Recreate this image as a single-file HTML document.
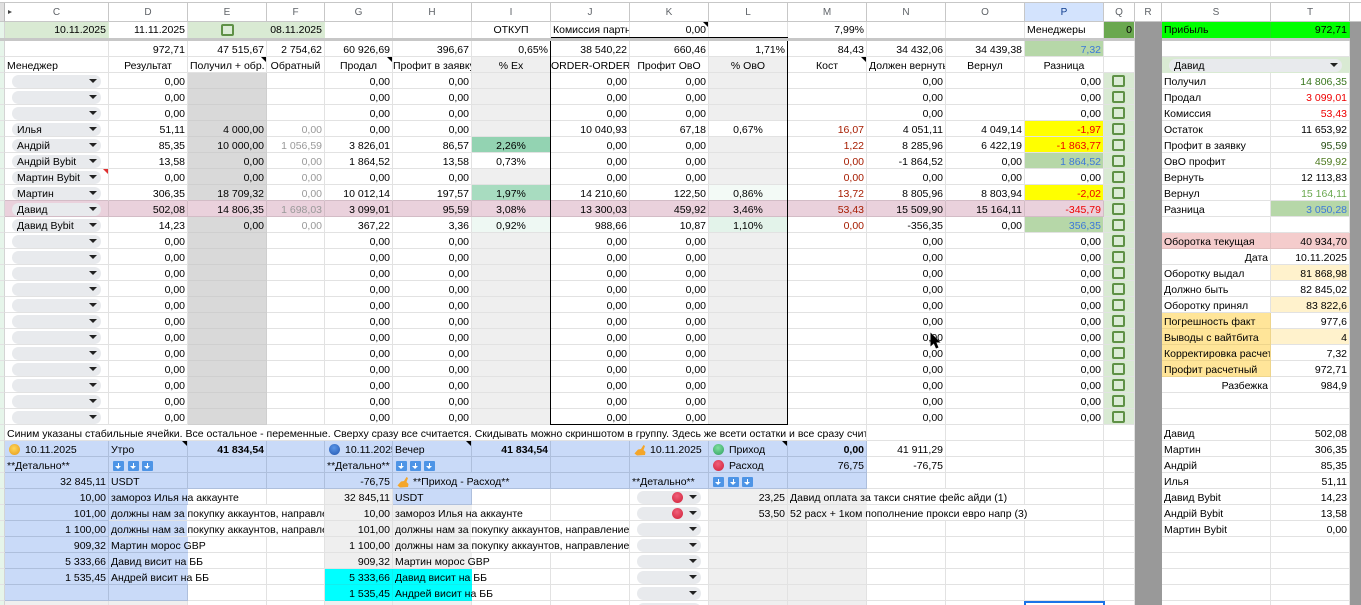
<!DOCTYPE html>
<html><head><meta charset="utf-8"><style>
html,body{margin:0;padding:0;width:1361px;height:605px;overflow:hidden;background:#fff}
#wrap{position:relative;width:1361px;height:605px;overflow:hidden}
table{position:absolute;left:0;top:3px;border-collapse:separate;border-spacing:0;table-layout:fixed;width:1361px}
td{height:16px;box-sizing:border-box;padding:3px 2px 0;border-right:1px solid #e2e2e2;border-bottom:1px solid #e2e2e2;text-align:right;white-space:nowrap;font:10.5px/12px "Liberation Sans","Noto Sans CJK SC",sans-serif;color:#000;vertical-align:top}
.u{background:#e6f5ea;border-right:1px solid #d4d4d4;padding:0}
.w td{height:19px;border-color:#c7c7c7;text-align:center;color:#5f6368;font-size:10px;line-height:15px;padding:2px 0 0}
.w td.u{background:#e0e0e0;border-right:1px solid #bbb}
.w td.sel{background:#d3e3fd;color:#0b3a8c}
.f td{border-bottom:0;padding-top:2px}
.f td.u{border-bottom:0}
.bar td{height:3px;padding:0;border:0;font-size:0;line-height:0;background:#c7c7c7}
.bar td.r{background:#999}
.l{text-align:left}
.c{text-align:center}
.h{overflow:hidden}
.nb{border-right:0}
.g{background:#efefef}
.e{background:#d9d9d9;border-color:#cfcfcf}
.q{background:#d9ead3;position:relative}
.r{background:#999;border-right:0;border-bottom:0;padding:0}
.y{background:#ff0;color:#e00}
.gb{background:#b6d7a8;color:#3c78d8}
.fg{color:#999}
.mr{color:#a61c00}
.b{background:#c9daf8;border-color:#aebfdc}
.cy{background:#0ff;border-color:#1ee}
.rel{position:relative}
.dg{background:#6aa84f}
.lime{background:#0f0;border-color:#1ee01e}
.pk{background:#f4cccc;border-color:#e3c0c0}
.cr{background:#fff2cc}
.am{background:#ffe599;border-color:#eed58c}
.bd{font-weight:bold}
.p{position:absolute;left:7px;top:2px;height:13px;width:89px;background:#e8eaed;border-radius:7px;padding-left:5px;box-sizing:border-box;line-height:14px;text-align:left}
.p:after{content:"";position:absolute;right:4px;top:4px;border-left:4px solid transparent;border-right:4px solid transparent;border-top:4px solid #222}
.p2{width:64px}
.p3{width:173px}
.k{position:absolute;left:8px;top:2px;width:13px;height:12px;box-sizing:border-box;border:2px solid #5f9146;border-radius:2px;background:#dcecd6}
.n:after,.nr:after{content:"";position:absolute;right:0;top:0;border-left:5px solid transparent;border-top:5px solid #000}
.nr:after{border-top-color:#e03030}
.o{position:absolute;left:4px;top:3px;width:11px;height:11px;border-radius:50%}
.oy{background:radial-gradient(circle at 45% 40%,#ffd75a,#e8a020 85%)}
.ob{background:radial-gradient(circle at 45% 35%,#5b96e8,#2a5fb8 85%)}
.og{background:radial-gradient(circle at 45% 35%,#7fe0a0,#3aa868 85%)}
.ore{background:radial-gradient(circle at 45% 35%,#f0607a,#d42840 85%)}
.pl{padding-left:20px}
.a{position:absolute;top:4px;width:10.5px;height:10px;background:#4d94e6;border-radius:1px}
.a:before{content:"";position:absolute;left:4.5px;top:1.5px;width:1.5px;height:4px;background:#fff}
.a:after{content:"";position:absolute;left:2.2px;top:5px;border-left:3px solid transparent;border-right:3px solid transparent;border-top:3.5px solid #fff}
.a1{left:4px}.a2{left:19px}.a3{left:33px}
svg.w1{position:absolute;left:4px;top:3px}
tr.d td:nth-child(n+2):nth-child(-n+15){background:#ead1dc;border-color:#d3bcc6}
tr.t td:nth-child(n+2):nth-child(-n+15){border-bottom-color:#d3bcc6}
.abs{position:absolute}
</style></head><body><div id="wrap">
<div class="abs" style="left:0;top:2px;width:1361px;height:1px;background:#c7c7c7"></div>
<table>
<colgroup><col style="width:5px"><col style="width:104px"><col style="width:79px"><col style="width:79px"><col style="width:58px"><col style="width:68px"><col style="width:79px"><col style="width:79px"><col style="width:79px"><col style="width:79px"><col style="width:79px"><col style="width:79px"><col style="width:79px"><col style="width:79px"><col style="width:79px"><col style="width:31px"><col style="width:27px"><col style="width:109px"><col style="width:79px"><col style="width:11px"></colgroup>
<tr class="w"><td class="u"><td>C<td>D<td>E<td>F<td>G<td>H<td>I<td>J<td>K<td>L<td>M<td>N<td>O<td class="sel">P<td>Q<td>R<td>S<td>T<td style="border-right:0">
<tr class="f"><td class="u"><td class="q" style="border-color:#d9ead3">10.11.2025<td>11.11.2025<td class="q" style="border-color:#d9ead3"><i class="k" style="left:33px"></i><td class="q" style="border-color:#d9ead3">08.11.2025<td><td><td class="c">ОТКУП<td class="l h">Комиссия партн<td class="n rel">0,00<td><td>7,99%<td><td><td class="l">Менеджеры<td class="dg">0<td class="r"><td class="l lime">Прибыль<td class="lime">972,71<td class="r">
<tr class="bar"><td class="u" colspan="16"><td class="r"><td colspan="2"><td class="r">
<tr><td class="u"><td><td>972,71<td>47 515,67<td>2 754,62<td>60 926,69<td>396,67<td>0,65%<td>38 540,22<td>660,46<td>1,71%<td>84,43<td>34 432,06<td>34 439,38<td class="gb">7,32<td><td class="r"><td><td><td class="r">
<tr><td class="u"><td class="l">Менеджер<td class="c">Результат<td class="c n rel">Получил + обр.<td class="c">Обратный<td class="c n rel">Продал<td class="c h" style="padding-left:0;padding-right:0">Профит в заявку<td class="c g">% Ex<td class="c h" style="padding-left:0;padding-right:0">ORDER-ORDER<td class="c">Профит ОвО<td class="c g">% ОвО<td class="c n rel">Кост<td class="c h" style="text-align:left">Должен вернуть<td class="c">Вернул<td class="c">Разница<td><td class="r"><td class="q" colspan="2" style="border-color:#d9ead3"><div class="p p3">Давид</div><td class="r">
<tr><td class="u"><td class="rel"><div class="p"></div><td>0,00<td class="e"><td><td>0,00<td>0,00<td class="g"><td>0,00<td>0,00<td class="g"><td><td>0,00<td><td>0,00<td class="q"><i class="k"></i><td class="r"><td class="l">Получил<td style="color:#38761d">14 806,35<td class="r">
<tr><td class="u"><td class="rel"><div class="p"></div><td>0,00<td class="e"><td><td>0,00<td>0,00<td class="g"><td>0,00<td>0,00<td class="g"><td><td>0,00<td><td>0,00<td class="q"><i class="k"></i><td class="r"><td class="l">Продал<td style="color:#e00">3 099,01<td class="r">
<tr><td class="u"><td class="rel"><div class="p"></div><td>0,00<td class="e"><td><td>0,00<td>0,00<td class="g"><td>0,00<td>0,00<td class="g"><td><td>0,00<td><td>0,00<td class="q"><i class="k"></i><td class="r"><td class="l">Комиссия<td style="color:#e00">53,43<td class="r">
<tr><td class="u"><td class="rel"><div class="p">Илья</div><td>51,11<td class="e">4 000,00<td class="fg">0,00<td>0,00<td>0,00<td class="g"><td>10 040,93<td>67,18<td class="c">0,67%<td class="mr">16,07<td>4 051,11<td>4 049,14<td class="y">-1,97<td class="q"><i class="k"></i><td class="r"><td class="l">Остаток<td>11 653,92<td class="r">
<tr><td class="u"><td class="rel"><div class="p">Андрій</div><td>85,35<td class="e">10 000,00<td class="fg">1 056,59<td>3 826,01<td>86,57<td class="c" style="background:#93d3b2">2,26%<td>0,00<td>0,00<td class="g"><td class="mr">1,22<td>8 285,96<td>6 422,19<td class="y">-1 863,77<td class="q"><i class="k"></i><td class="r"><td class="l">Профит в заявку<td style="color:#274e13">95,59<td class="r">
<tr><td class="u"><td class="rel"><div class="p">Андрій Bybit</div><td>13,58<td class="e">0,00<td class="fg">0,00<td>1 864,52<td>13,58<td class="c">0,73%<td>0,00<td>0,00<td class="g"><td class="mr">0,00<td>-1 864,52<td>0,00<td class="gb">1 864,52<td class="q"><i class="k"></i><td class="r"><td class="l">ОвО профит<td style="color:#4d7a1f">459,92<td class="r">
<tr><td class="u"><td class="rel nr"><div class="p">Мартин Bybit</div><td>0,00<td class="e">0,00<td class="fg">0,00<td>0,00<td>0,00<td class="g"><td>0,00<td>0,00<td class="g"><td class="mr">0,00<td>0,00<td>0,00<td>0,00<td class="q"><i class="k"></i><td class="r"><td class="l">Вернуть<td>12 113,83<td class="r">
<tr class="t"><td class="u"><td class="rel"><div class="p">Мартин</div><td>306,35<td class="e">18 709,32<td class="fg">0,00<td>10 012,14<td>197,57<td class="c" style="background:#a8dcc0">1,97%<td>14 210,60<td>122,50<td class="c" style="background:#f3faf6">0,86%<td class="mr">13,72<td>8 805,96<td>8 803,94<td class="y">-2,02<td class="q"><i class="k"></i><td class="r"><td class="l">Вернул<td style="color:#6aa84f">15 164,11<td class="r">
<tr class="d"><td class="u"><td class="rel"><div class="p">Давид</div><td>502,08<td>14 806,35<td class="fg">1 698,03<td>3 099,01<td>95,59<td class="c">3,08%<td>13 300,03<td>459,92<td class="c">3,46%<td class="mr">53,43<td>15 509,90<td>15 164,11<td class="y">-345,79<td class="q"><i class="k"></i><td class="r"><td class="l">Разница<td class="gb">3 050,28<td class="r">
<tr><td class="u"><td class="rel"><div class="p">Давид Bybit</div><td>14,23<td class="e">0,00<td class="fg">0,00<td>367,22<td>3,36<td class="c" style="background:#eef8f3">0,92%<td>988,66<td>10,87<td class="c" style="background:#e3f3ea">1,10%<td class="mr">0,00<td>-356,35<td>0,00<td class="gb">356,35<td class="q"><i class="k"></i><td class="r"><td><td><td class="r">
<tr><td class="u"><td class="rel"><div class="p"></div><td>0,00<td class="e"><td><td>0,00<td>0,00<td class="g"><td>0,00<td>0,00<td class="g"><td><td>0,00<td><td>0,00<td class="q"><i class="k"></i><td class="r"><td class="l pk">Оборотка текущая<td class="pk">40 934,70<td class="r">
<tr><td class="u"><td class="rel"><div class="p"></div><td>0,00<td class="e"><td><td>0,00<td>0,00<td class="g"><td>0,00<td>0,00<td class="g"><td><td>0,00<td><td>0,00<td class="q"><i class="k"></i><td class="r"><td>Дата<td>10.11.2025<td class="r">
<tr><td class="u"><td class="rel"><div class="p"></div><td>0,00<td class="e"><td><td>0,00<td>0,00<td class="g"><td>0,00<td>0,00<td class="g"><td><td>0,00<td><td>0,00<td class="q"><i class="k"></i><td class="r"><td class="l">Оборотку выдал<td class="cr">81 868,98<td class="r">
<tr><td class="u"><td class="rel"><div class="p"></div><td>0,00<td class="e"><td><td>0,00<td>0,00<td class="g"><td>0,00<td>0,00<td class="g"><td><td>0,00<td><td>0,00<td class="q"><i class="k"></i><td class="r"><td class="l">Должно быть<td>82 845,02<td class="r">
<tr><td class="u"><td class="rel"><div class="p"></div><td>0,00<td class="e"><td><td>0,00<td>0,00<td class="g"><td>0,00<td>0,00<td class="g"><td><td>0,00<td><td>0,00<td class="q"><i class="k"></i><td class="r"><td class="l">Оборотку принял<td class="cr">83 822,6<td class="r">
<tr><td class="u"><td class="rel"><div class="p"></div><td>0,00<td class="e"><td><td>0,00<td>0,00<td class="g"><td>0,00<td>0,00<td class="g"><td><td>0,00<td><td>0,00<td class="q"><i class="k"></i><td class="r"><td class="l am">Погрешность факт<td>977,6<td class="r">
<tr><td class="u"><td class="rel"><div class="p"></div><td>0,00<td class="e"><td><td>0,00<td>0,00<td class="g"><td>0,00<td>0,00<td class="g"><td><td>0,00<td><td>0,00<td class="q"><i class="k"></i><td class="r"><td class="l am">Выводы с вайтбита<td class="cr">4<td class="r">
<tr><td class="u"><td class="rel"><div class="p"></div><td>0,00<td class="e"><td><td>0,00<td>0,00<td class="g"><td>0,00<td>0,00<td class="g"><td><td>0,00<td><td>0,00<td class="q"><i class="k"></i><td class="r"><td class="l am h">Корректировка расчет<td>7,32<td class="r">
<tr><td class="u"><td class="rel"><div class="p"></div><td>0,00<td class="e"><td><td>0,00<td>0,00<td class="g"><td>0,00<td>0,00<td class="g"><td><td>0,00<td><td>0,00<td class="q"><i class="k"></i><td class="r"><td class="l am">Профит расчетный<td>972,71<td class="r">
<tr><td class="u"><td class="rel"><div class="p"></div><td>0,00<td class="e"><td><td>0,00<td>0,00<td class="g"><td>0,00<td>0,00<td class="g"><td><td>0,00<td><td>0,00<td class="q"><i class="k"></i><td class="r"><td>Разбежка<td>984,9<td class="r">
<tr><td class="u"><td class="rel"><div class="p"></div><td>0,00<td class="e"><td><td>0,00<td>0,00<td class="g"><td>0,00<td>0,00<td class="g"><td><td>0,00<td><td>0,00<td class="q"><i class="k"></i><td class="r"><td><td><td class="r">
<tr><td class="u"><td class="rel"><div class="p"></div><td>0,00<td class="e"><td><td>0,00<td>0,00<td class="g"><td>0,00<td>0,00<td class="g"><td><td>0,00<td><td>0,00<td class="q"><i class="k"></i><td class="r"><td><td><td class="r">
<tr><td class="u"><td class="l h" colspan="11">Синим указаны стабильные ячейки. Все остальное - переменные. Сверху сразу все считается. Скидывать можно скриншотом в группу. Здесь же всети остатки и все сразу счит<td><td><td><td><td class="r"><td class="l">Давид<td>502,08<td class="r">
<tr><td class="u"><td class="b l rel pl"><i class="o oy"></i>10.11.2025<td class="b l n rel">Утро<td class="b bd">41 834,54<td class="b"><td class="b l rel h pl"><i class="o ob"></i>10.11.2025<td class="b l n rel">Вечер<td class="b bd">41 834,54<td class="b"><td class="b l rel pl"><svg class="w1" width="12" height="12" viewBox="0 0 12 12"><path d="M0.5 9.5 L4 5.5 L7 5 L9.5 1 L11 2 L9.5 6 L11.5 8 L11 11 L3 11.5 Z" fill="#f4a62a"/></svg>10.11.2025<td class="b l n rel pl"><i class="o og"></i>Приход<td class="b bd">0,00<td>41 911,29<td><td><td><td class="r"><td class="l">Мартин<td>306,35<td class="r">
<tr><td class="u"><td class="b l">**Детально**<td class="b rel"><i class="a a1"></i><i class="a a2"></i><i class="a a3"></i><td class="b"><td class="b"><td class="b l">**Детально**<td class="b rel"><i class="a a1" style="left:3px"></i><i class="a a2" style="left:17px"></i><i class="a a3" style="left:31px"></i><td class="b"><td class="b"><td class="b"><td class="b l rel pl"><i class="o ore"></i>Расход<td class="b">76,75<td>-76,75<td><td><td><td class="r"><td class="l">Андрій<td>85,35<td class="r">
<tr><td class="u"><td class="b">32 845,11<td class="b l">USDT<td class="b"><td class="b"><td class="b">-76,75<td class="b l rel nb pl"><svg class="w1" width="12" height="12" viewBox="0 0 12 12"><path d="M0.5 9.5 L4 5.5 L7 5 L9.5 1 L11 2 L9.5 6 L11.5 8 L11 11 L3 11.5 Z" fill="#f4a62a"/></svg>**Приход - Расход**<td class="b"><td class="b"><td class="b l">**Детально**<td class="b rel"><i class="a a1"></i><i class="a a2"></i><i class="a a3"></i><td class="b"><td><td><td><td><td class="r"><td class="l">Илья<td>51,11<td class="r">
<tr><td class="u"><td class="b">10,00<td class="b l nb">замороз Илья на аккаунте<td><td><td class="g">32 845,11<td class="b l">USDT<td><td><td class="rel"><div class="p p2"><i class="o ore" style="left:35px;top:1px"></i></div><td class="g">23,25<td class="g l nb">Давид оплата за такси снятие фейс айди (1)<td class="nb"><td><td><td><td class="r"><td class="l">Давид Bybit<td>14,23<td class="r">
<tr><td class="u"><td class="b">101,00<td class="l h" colspan="3" style="background:linear-gradient(90deg,#c9daf8 78px,#fff 78px)">должны нам за покупку аккаунтов, направление<td class="g">10,00<td class="g l nb">замороз Илья на аккаунте<td><td><td class="rel"><div class="p p2"><i class="o ore" style="left:35px;top:1px"></i></div><td class="g">53,50<td class="g l nb">52 расх + 1ком пополнение прокси евро напр (3)<td class="nb"><td class="nb"><td><td><td class="r"><td class="l">Андрій Bybit<td>13,58<td class="r">
<tr><td class="u"><td class="b">1 100,00<td class="l h" colspan="3" style="background:linear-gradient(90deg,#c9daf8 78px,#fff 78px)">должны нам за покупку аккаунтов, направление<td class="g">101,00<td class="l h" colspan="3" style="background:linear-gradient(90deg,#efefef 78px,#fff 78px)">должны нам за покупку аккаунтов, направление<td class="rel"><div class="p p2"></div><td class="g"><td class="g"><td><td><td><td><td class="r"><td class="l">Мартин Bybit<td>0,00<td class="r">
<tr><td class="u"><td class="b">909,32<td class="b l nb">Мартин морос GBP<td><td><td class="g">1 100,00<td class="l h" colspan="3" style="background:linear-gradient(90deg,#efefef 78px,#fff 78px)">должны нам за покупку аккаунтов, направление<td class="rel"><div class="p p2"></div><td class="g"><td class="g"><td><td><td><td><td class="r"><td><td><td class="r">
<tr><td class="u"><td class="b">5 333,66<td class="b l nb">Давид висит на ББ<td><td><td class="g">909,32<td class="g l nb">Мартин морос GBP<td><td><td class="rel"><div class="p p2"></div><td class="g"><td class="g"><td><td><td><td><td class="r"><td><td><td class="r">
<tr><td class="u"><td class="b">1 535,45<td class="b l nb">Андрей висит на ББ<td><td><td class="cy">5 333,66<td class="cy l nb">Давид висит на ББ<td><td><td class="rel"><div class="p p2"></div><td class="g"><td class="g"><td><td><td><td><td class="r"><td><td><td class="r">
<tr><td class="u"><td class="b"><td class="b"><td><td><td class="cy">1 535,45<td class="cy l nb">Андрей висит на ББ<td><td><td class="rel"><div class="p p2"></div><td class="g"><td class="g"><td><td><td><td><td class="r"><td><td><td class="r">
<tr><td class="u"><td class="g"><td class="g"><td><td><td class="g"><td class="g"><td><td><td class="rel"><div class="p p2"></div><td class="g"><td class="g"><td><td><td><td><td class="r"><td><td><td class="r">
</table>
<div class="abs" style="left:551px;top:37px;width:237px;height:1px;background:#000"></div>
<div class="abs" style="left:550px;top:41px;width:236px;height:383px;border:1px solid #000;border-top:0"></div>
<div class="abs" style="left:8px;top:10px;border-left:4px solid #444;border-top:2.5px solid transparent;border-bottom:2.5px solid transparent"></div>
<div class="abs" style="left:1024px;top:601px;width:77px;height:8px;border:2px solid #1a73e8"></div>
<svg class="abs" style="left:930px;top:332px" width="12" height="18" viewBox="0 0 12 18"><path d="M0.5 0.5 L0.5 14.5 L3.8 11.5 L6 16.5 L8.5 15.5 L6.4 10.5 L10.5 10.5 Z" fill="#000"/></svg>
</div></body></html>
